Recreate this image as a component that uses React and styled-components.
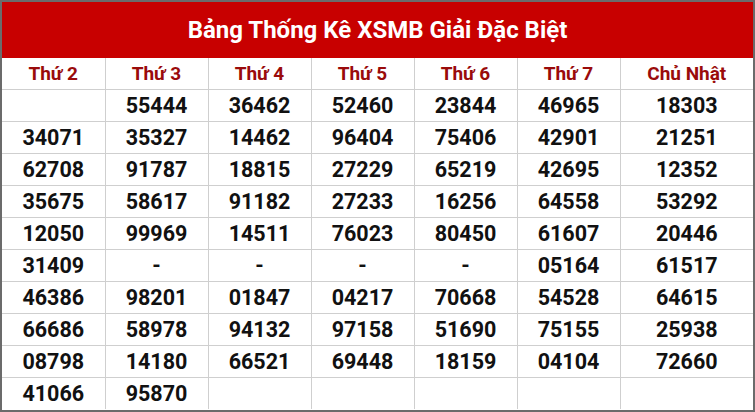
import React from 'react'
import styled, { createGlobalStyle } from 'styled-components'

const days = ['Thứ 2', 'Thứ 3', 'Thứ 4', 'Thứ 5', 'Thứ 6', 'Thứ 7', 'Chủ Nhật']

const rows = [
  ['', '55444', '36462', '52460', '23844', '46965', '18303'],
  ['34071', '35327', '14462', '96404', '75406', '42901', '21251'],
  ['62708', '91787', '18815', '27229', '65219', '42695', '12352'],
  ['35675', '58617', '91182', '27233', '16256', '64558', '53292'],
  ['12050', '99969', '14511', '76023', '80450', '61607', '20446'],
  ['31409', '-', '-', '-', '-', '05164', '61517'],
  ['46386', '98201', '01847', '04217', '70668', '54528', '64615'],
  ['66686', '58978', '94132', '97158', '51690', '75155', '25938'],
  ['08798', '14180', '66521', '69448', '18159', '04104', '72660'],
  ['41066', '95870', '', '', '', '', '']
]

const GlobalStyle = createGlobalStyle`
  body {
    margin: 0;
    background: #fff;
    font-family: Roboto, "Liberation Sans", sans-serif;
  }
`

const StatsTable = () => (
  <Wrapper>
    <GlobalStyle />
    <Title>Bảng Thống Kê XSMB Giải Đặc Biệt</Title>
    <Table>
      <colgroup>
        {days.map((d, i) => (
          <col key={i} style={{ width: i < 6 ? 103 : 'auto' }} />
        ))}
      </colgroup>
      <thead>
        <tr>
          {days.map(d => (
            <DayCell key={d}>{d}</DayCell>
          ))}
        </tr>
      </thead>
      <tbody>
        {rows.map((row, i) => (
          <tr key={i}>
            {row.map((num, j) => (
              <NumberCell key={j}>{num}</NumberCell>
            ))}
          </tr>
        ))}
      </tbody>
    </Table>
  </Wrapper>
)

const Wrapper = styled.div`
  width: 755px;
  height: 412px;
  box-sizing: border-box;
  border: 2px solid #6b6b6b;
  overflow: hidden;
`

const Title = styled.div`
  height: 56px;
  background: #c80000;
  color: #fff;
  font-size: 24px;
  font-weight: 700;
  display: flex;
  align-items: center;
  justify-content: center;
`

const Table = styled.table`
  width: 100%;
  table-layout: fixed;
  border-collapse: collapse;
  border-style: hidden;
`

const DayCell = styled.th`
  height: 31px;
  padding: 0;
  border: 1px solid #cfcfcf;
  color: #9a0b0b;
  font-size: 19px;
  font-weight: 700;
  text-align: center;
`

const NumberCell = styled.td`
  height: 31px;
  padding: 0;
  border: 1px solid #cfcfcf;
  color: #111;
  font-size: 21.5px;
  font-weight: 700;
  text-align: center;
`

export default StatsTable
